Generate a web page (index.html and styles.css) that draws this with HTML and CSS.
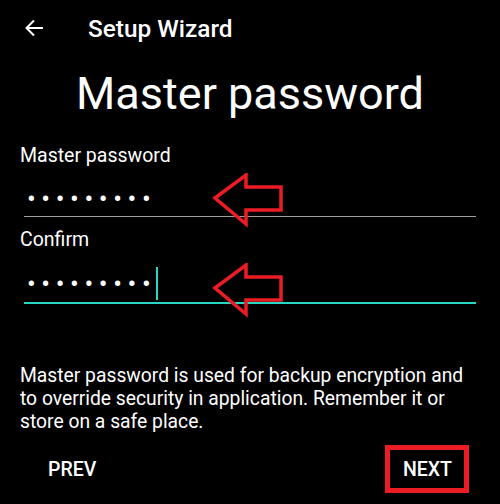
FILE: index.html
```html
<!DOCTYPE html>
<html>
<head>
<meta charset="utf-8">
<link rel="stylesheet" href="styles.css">
</head>
<body>
<div class="screen">
  <header class="appbar">
    <svg class="back" width="24" height="24" viewBox="0 0 24 24"><path d="M21 12H4.5M12 4.5L4.5 12 12 19.5" fill="none" stroke="#fff" stroke-width="2"/></svg>
    <span class="appbar-title">Setup Wizard</span>
  </header>
  <h1 class="headline">Master password</h1>
  <div class="form">
    <div class="field">
      <label class="label">Master password</label>
      <div class="input">
        <span class="dots">•••••••••</span>
      </div>
      <svg class="mark mark-1" width="74" height="56" viewBox="0 0 74 56"><path d="M3 25 L34 2 L34 14 L69 14 L69 37 L34 37 L34 51 Z" fill="none" stroke="#ec1c24" stroke-width="3.5" stroke-linejoin="miter"/></svg>
    </div>
    <div class="field">
      <label class="label">Confirm</label>
      <div class="input focused">
        <span class="dots">•••••••••</span><span class="cursor"></span>
      </div>
      <svg class="mark mark-2" width="74" height="56" viewBox="0 0 74 56"><path d="M3 25 L34 2 L34 14 L69 14 L69 37 L34 37 L34 51 Z" fill="none" stroke="#ec1c24" stroke-width="3.5" stroke-linejoin="miter"/></svg>
    </div>
  </div>
  <p class="info">Master password is used for backup encryption and to override security in application. Remember it or store on a safe place.</p>
  <footer class="actions">
    <button class="btn">PREV</button>
    <button class="btn btn-next">NEXT</button>
  </footer>
</div>
</body>
</html>
```
FILE: styles.css
```css
html, body {
  margin: 0;
  padding: 0;
  background: #000;
}
.screen {
  width: 500px;
  height: 504px;
  background: #000;
  color: #fff;
  font-family: Roboto, "Noto Sans", sans-serif;
  overflow: hidden;
}
.appbar {
  display: flex;
  align-items: center;
  height: 56px;
  padding-left: 22px;
}
.back {
  display: block;
}
.appbar-title {
  margin-left: 42px;
  font-size: 24.4px;
  font-weight: 500;
}
.headline {
  margin: 6px 0 0 0;
  text-align: center;
  font-size: 45px;
  font-weight: 400;
  line-height: 64px;
}
.form {
  padding: 0 24px;
  margin-top: 18px;
}
.field {
  position: relative;
}
.label {
  display: block;
  margin-left: -4px;
  font-size: 19.5px;
  line-height: 24px;
  color: #fff;
}
.input {
  display: flex;
  align-items: center;
  height: 48px;
  border-bottom: 1px solid #9e9e9e;
  margin-bottom: 11px;
}
.input.focused {
  border-bottom: 2px solid #26d7c4;
  height: 50px;
  margin-bottom: 0;
}
.dots {
  font-size: 26px;
  letter-spacing: 5.6px;
  padding-left: 3px;
  padding-top: 14px;
  line-height: 30px;
}
.cursor {
  display: inline-block;
  width: 2px;
  height: 33px;
  background: #26d7c4;
  margin-left: 0;
  margin-top: 12px;
}
.mark {
  position: absolute;
  left: 188px;
}
.mark-1 {
  top: 29px;
}
.mark-2 {
  top: 35px;
}
.info {
  margin: 60px 0 0 0;
  padding: 0 20px;
  font-size: 19.3px;
  line-height: 23px;
}
.actions {
  display: flex;
  justify-content: space-between;
  align-items: center;
  padding: 0 31px 0 32px;
  margin-top: 12px;
}
.btn {
  background: none;
  border: 5px solid transparent;
  color: #fff;
  font-family: Roboto, "Noto Sans", sans-serif;
  font-size: 19.5px;
  font-weight: 500;
  padding: 0 11px;
  height: 48px;
}
.btn-next {
  border-color: #ec1c24;
  padding: 0 12px 0 13px;
}
```
